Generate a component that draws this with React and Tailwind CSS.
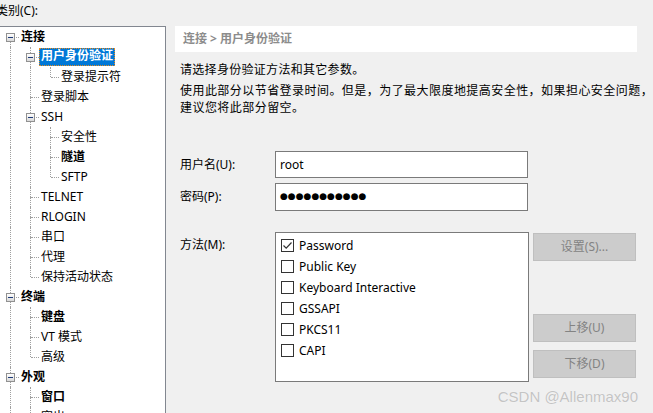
import { useState } from 'react';

const FONT = { fontFamily: '"Noto Sans", "Noto Sans CJK SC", sans-serif' };

// depth, label, bold, box, first, last
const TREE = [
  { d: 0, label: '连接', bold: true, box: true, first: true, g: [] },
  { d: 1, label: '用户身份验证', bold: true, box: true, selected: true, g: [true] },
  { d: 2, label: '登录提示符', last: true, g: [true, true] },
  { d: 1, label: '登录脚本', g: [true] },
  { d: 1, label: 'SSH', box: true, g: [true] },
  { d: 2, label: '安全性', g: [true, true] },
  { d: 2, label: '隧道', bold: true, g: [true, true] },
  { d: 2, label: 'SFTP', last: true, g: [true, true] },
  { d: 1, label: 'TELNET', g: [true] },
  { d: 1, label: 'RLOGIN', g: [true] },
  { d: 1, label: '串口', g: [true] },
  { d: 1, label: '代理', g: [true] },
  { d: 1, label: '保持活动状态', last: true, g: [true] },
  { d: 0, label: '终端', bold: true, box: true, g: [] },
  { d: 1, label: '键盘', bold: true, g: [true] },
  { d: 1, label: 'VT 模式', g: [true] },
  { d: 1, label: '高级', last: true, g: [true] },
  { d: 0, label: '外观', bold: true, box: true, g: [] },
  { d: 1, label: '窗口', bold: true, g: [true] },
  { d: 1, label: '突出', g: [true] },
];

function Guide() {
  return (
    <div className="relative w-[20px] h-[20px] shrink-0">
      <div className="absolute left-[10px] top-0 h-[20px] border-l border-dotted border-[#a0a0a0]" />
    </div>
  );
}

function MinusBox() {
  return (
    <div className="absolute left-[6px] top-[6px] w-[9px] h-[9px] border border-[#919191] bg-gradient-to-b from-white to-[#d9d9d9] flex items-center justify-center">
      <div className="w-[5px] h-px bg-[#1e3a78]" />
    </div>
  );
}

function TreeRow({ node }) {
  const { d, label, bold, box, first, last, selected, g } = node;
  const topLine = !(d === 0 && first);
  return (
    <div className="flex items-center h-[20px] whitespace-nowrap">
      {g.map((on, i) => (on ? <Guide key={i} /> : <div key={i} className="w-[20px] shrink-0" />))}
      <div className="relative w-[20px] h-[20px] shrink-0">
        {topLine && <div className="absolute left-[10px] top-0 h-[10px] border-l border-dotted border-[#a0a0a0]" />}
        {!last && <div className="absolute left-[10px] top-[10px] h-[10px] border-l border-dotted border-[#a0a0a0]" />}
        <div className="absolute left-[11px] top-[10px] w-[8px] border-t border-dotted border-[#a0a0a0]" />
        {box && <MinusBox />}
      </div>
      {selected ? (
        <span className="ml-[-1px] px-[2px] h-[18px] leading-[16px] bg-[#0078d7] text-white font-bold outline outline-1 outline-dotted outline-[#e58a1f] -outline-offset-1">
          {label}
        </span>
      ) : (
        <span className={`pl-[1px] leading-[20px] text-black ${bold ? 'font-bold' : ''}`}>{label}</span>
      )}
    </div>
  );
}

function Check({ checked, label }) {
  return (
    <div className="flex items-center h-[21px]">
      <div className="w-[13px] h-[13px] border border-[#333333] bg-white ml-[5px] flex items-center justify-center">
        {checked && (
          <svg width="11" height="11" viewBox="0 0 11 11">
            <path d="M1.5 5.5 L4.2 8.2 L9.5 2.5" fill="none" stroke="#333333" strokeWidth="1.2" />
          </svg>
        )}
      </div>
      <span className="ml-[5px] text-black">{label}</span>
    </div>
  );
}

function Btn({ children, className = '' }) {
  return (
    <div className={`w-[103px] h-[28px] bg-[#cccccc] border border-[#bfbfbf] flex items-center justify-center text-[#838383] ${className}`}>
      {children}
    </div>
  );
}

export default function App() {
  const [methods] = useState([
    { label: 'Password', checked: true },
    { label: 'Public Key' },
    { label: 'Keyboard Interactive' },
    { label: 'GSSAPI' },
    { label: 'PKCS11' },
    { label: 'CAPI' },
  ]);

  return (
    <div className="relative w-[653px] h-[413px] bg-[#f0f0f0] flex overflow-hidden text-[12px]" style={FONT}>
      {/* left: category tree */}
      <div className="w-[166px] shrink-0 flex flex-col">
        <div className="h-[26px] ml-[-4px] leading-[22px] text-black">类别(C):</div>
        <div className="flex-1 bg-white border-t border-r border-[#828790] overflow-hidden">
          {TREE.map((n, i) => (
            <TreeRow key={i} node={n} />
          ))}
        </div>
      </div>

      {/* right: page */}
      <div className="flex-1 flex flex-col pt-[26px]">
        <div className="ml-[9px] w-[462px] h-[26px] bg-white pl-[8px] flex items-center text-[#8c8c8c] font-bold">
          连接 &gt; 用户身份验证
        </div>
        <div className="pl-[14px] text-black">
          <p className="mt-[9px] leading-[17px] tracking-[0.3px]">请选择身份验证方法和其它参数。</p>
          <p className="mt-[4px] leading-[17px] tracking-[0.45px] whitespace-nowrap">
            使用此部分以节省登录时间。但是，为了最大限度地提高安全性，如果担心安全问题，
            <br />
            建议您将此部分留空。
          </p>

          <div className="mt-[35px] flex items-center">
            <span className="w-[95px]">用户名(U):</span>
            <div className="w-[253px] h-[27px] bg-white border border-[#7a7a7a] pl-[4px] flex items-center">root</div>
          </div>
          <div className="mt-[5px] flex items-center">
            <span className="w-[95px]">密码(P):</span>
            <div
              className="w-[253px] h-[28px] bg-white border border-[#7a7a7a] pl-[4px] flex items-center text-[9px] tracking-[0px]"
              style={{ fontFamily: '"DejaVu Sans", sans-serif' }}
            >
              ●●●●●●●●●●●
            </div>
          </div>

          <div className="mt-[21px] flex items-start">
            <span className="w-[95px] pt-[4px] leading-[17px]">方法(M):</span>
            <div className="w-[254px] h-[150px] bg-white border border-[#7a7a7a] pt-[2px]">
              {methods.map((m) => (
                <Check key={m.label} checked={m.checked} label={m.label} />
              ))}
            </div>
            <div className="ml-[4px] pt-[1px] flex flex-col">
              <Btn>设置(S)...</Btn>
              <Btn className="mt-[53px]">上移(U)</Btn>
              <Btn className="mt-[8px]">下移(D)</Btn>
            </div>
          </div>
        </div>
      </div>

      {/* dialog edge */}
      <div className="w-[5px] shrink-0 bg-black" />

      {/* watermark */}
      <div
        className="absolute right-[15px] top-[387px] text-[15px] text-[#c4c4c4] leading-[20px]"
        style={{ fontFamily: '"Liberation Sans", Arial, sans-serif', textShadow: '0 0 1px #ffffff' }}
      >
        CSDN @Allenmax90
      </div>
    </div>
  );
}
